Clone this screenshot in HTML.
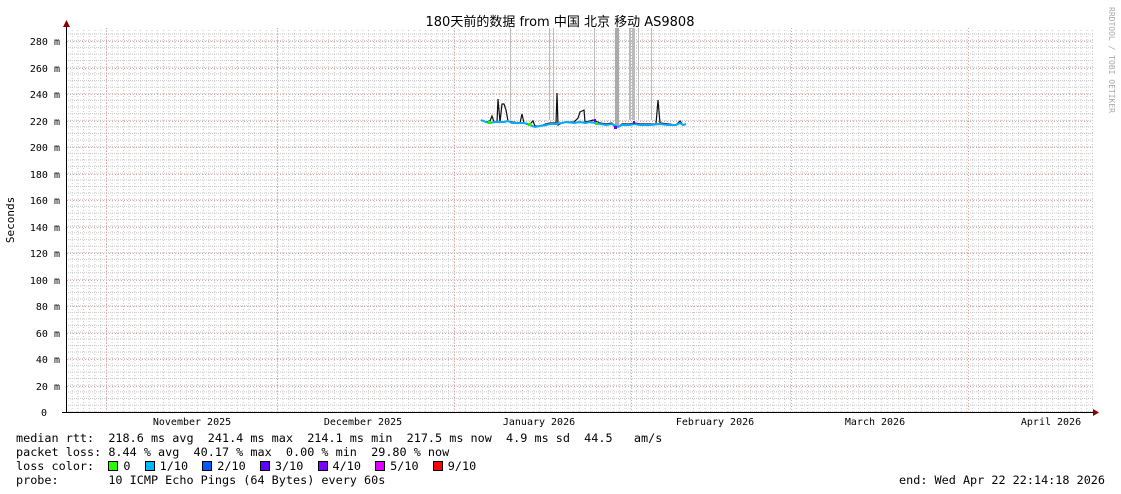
<!DOCTYPE html>
<html><head><meta charset="utf-8"><style>
html,body{margin:0;padding:0;background:#fff;width:1121px;height:494px;overflow:hidden;position:relative}
svg{display:block;position:absolute;left:0;top:0}
text{font-family:"DejaVu Sans Mono","Liberation Mono",monospace;font-size:10px;fill:#000}
.lg{position:absolute;left:16px;font-family:"DejaVu Sans Mono","Liberation Mono",monospace;font-size:11.8px;line-height:14px;white-space:pre;color:#000}
.b{display:inline-block;width:8px;height:8px;border:1px solid #000;vertical-align:-1px;margin-right:5px}
</style></head><body>
<svg width="1121" height="494" xmlns="http://www.w3.org/2000/svg">
<defs>
<pattern id="vg" x="66" y="0" width="5.7" height="3" patternUnits="userSpaceOnUse"><rect x="0" y="0" width="1" height="1" fill="#c8c8c8"/></pattern>
<pattern id="hg" x="0" y="0.5" width="2" height="6.625" patternUnits="userSpaceOnUse"><rect x="0" y="0" width="1" height="1" fill="#c8c8c8"/></pattern>
</defs>
<rect x="67" y="28" width="1026" height="384" fill="url(#vg)"/>
<rect x="67" y="28" width="1026" height="384" fill="url(#hg)"/>
<g stroke="#e8a0a0" stroke-width="1" stroke-dasharray="1,2">
<line x1="67" x2="1093" y1="41.5" y2="41.5"/><line x1="67" x2="1093" y1="68.5" y2="68.5"/><line x1="67" x2="1093" y1="94.5" y2="94.5"/><line x1="67" x2="1093" y1="121.5" y2="121.5"/><line x1="67" x2="1093" y1="147.5" y2="147.5"/><line x1="67" x2="1093" y1="174.5" y2="174.5"/><line x1="67" x2="1093" y1="200.5" y2="200.5"/><line x1="67" x2="1093" y1="227.5" y2="227.5"/><line x1="67" x2="1093" y1="253.5" y2="253.5"/><line x1="67" x2="1093" y1="280.5" y2="280.5"/><line x1="67" x2="1093" y1="306.5" y2="306.5"/><line x1="67" x2="1093" y1="333.5" y2="333.5"/><line x1="67" x2="1093" y1="359.5" y2="359.5"/><line x1="67" x2="1093" y1="386.5" y2="386.5"/>
<line x1="106.5" x2="106.5" y1="28" y2="412"/><line x1="277.5" x2="277.5" y1="28" y2="412"/><line x1="454.5" x2="454.5" y1="28" y2="412"/><line x1="631.5" x2="631.5" y1="28" y2="412"/><line x1="791.5" x2="791.5" y1="28" y2="412"/><line x1="968.5" x2="968.5" y1="28" y2="412"/>
</g>
<g fill="#bbb">
<rect x="510" y="28" width="1" height="92"/><rect x="549" y="28" width="1" height="92"/><rect x="553" y="28" width="1" height="92"/><rect x="594" y="28" width="1" height="92"/><rect x="615" y="28" width="4" height="98" fill="#aaa"/><rect x="629" y="28" width="2" height="92"/><rect x="632" y="28" width="3" height="92"/><rect x="638" y="28" width="1" height="92"/><rect x="651" y="28" width="1" height="92"/>
</g>
<polyline fill="none" stroke="#111" stroke-width="1.2" points="481,120 486,122 490,121 492,116 494,122 497,122 498,99 500,122 502,104 504,104 506,110 508,121 512,122 520,123 522,114 524,123 530,124 533,121 535,126 540,126 546,124 550,123 556,123 557,93 558,125 562,123 566,122 574,122 578,118 580,112 584,110 585,122 590,121 593,120 600,123 606,124 612,123 614,126 618,127 622,124 630,124 634,123 640,124 650,124 656,124 658,100 660,123 668,124 676,125 680,121 683,125 686,124"/>
<polyline fill="none" stroke="#00aaff" stroke-width="2" points="481,120 486,122 490,123 494,122 497,122 500,122 504,122 508,121 512,123 520,123 524,123 530,125 535,127 540,126 546,125 550,124 556,124 562,123 566,122 574,123 580,122 585,123 590,122 600,124 606,125 612,124 618,127 622,125 630,125 634,124 640,125 650,125 660,124 668,125 676,125 680,123 683,125 686,124"/>
<g fill="#22ee00"><rect x="488" y="121" width="3" height="3"/><rect x="528" y="123" width="3" height="3"/><rect x="595" y="122" width="3" height="3"/></g>
<g fill="#6600ff"><rect x="614" y="126" width="3" height="3"/><rect x="594" y="119" width="2" height="3"/><rect x="633" y="121" width="2" height="3"/></g>
<line x1="66.5" y1="26" x2="66.5" y2="413" stroke="#000"/>
<line x1="62" y1="412.5" x2="1095" y2="412.5" stroke="#000"/>
<polygon points="63,27 70,27 66.5,20" fill="#800"/>
<polygon points="1093,409 1093,416 1099,412.5" fill="#800"/>
<g text-anchor="end">
<text x="60" y="45">280 m</text><text x="60" y="72">260 m</text><text x="60" y="98">240 m</text><text x="60" y="125">220 m</text><text x="60" y="151">200 m</text><text x="60" y="178">180 m</text><text x="60" y="204">160 m</text><text x="60" y="231">140 m</text><text x="60" y="257">120 m</text><text x="60" y="284">100 m</text><text x="60" y="310">80 m</text><text x="60" y="337">60 m</text><text x="60" y="363">40 m</text><text x="60" y="390">20 m</text><text x="47" y="416">0</text>
</g>
<g text-anchor="middle">
<text x="192" y="425">November 2025</text><text x="363" y="425">December 2025</text><text x="539" y="425">January 2026</text><text x="715" y="425">February 2026</text><text x="875" y="425">March 2026</text><text x="1051" y="425">April 2026</text>
<text x="560" y="26" style="font-size:13px;font-family:'DejaVu Sans','Noto Sans CJK SC',sans-serif">180天前的数据 from 中国 北京 移动 AS9808</text>
<text transform="translate(14,220) rotate(-90)" style="font-size:11px">Seconds</text>
<text transform="translate(1109,60) rotate(90)" style="font-size:8px;fill:#aaa">RRDTOOL / TOBI OETIKER</text>
</g>
</svg>
<div class="lg" style="top:431px">median rtt:  218.6 ms avg  241.4 ms max  214.1 ms min  217.5 ms now  4.9 ms sd  44.5   am/s</div>
<div class="lg" style="top:445px">packet loss: 8.44 % avg  40.17 % max  0.00 % min  29.80 % now</div>
<div class="lg" style="top:459px">loss color:  <span class="b" style="background:#26ff00"></span>0  <span class="b" style="background:#00b8ff"></span>1/10  <span class="b" style="background:#0059ff"></span>2/10  <span class="b" style="background:#5e00ff"></span>3/10  <span class="b" style="background:#7e00ff"></span>4/10  <span class="b" style="background:#dd00ff"></span>5/10  <span class="b" style="background:#ff0000"></span>9/10</div>
<div class="lg" style="top:473px">probe:       10 ICMP Echo Pings (64 Bytes) every 60s</div>
<div class="lg" style="top:473px;left:auto;right:16px">end: Wed Apr 22 22:14:18 2026</div>
</body></html>
